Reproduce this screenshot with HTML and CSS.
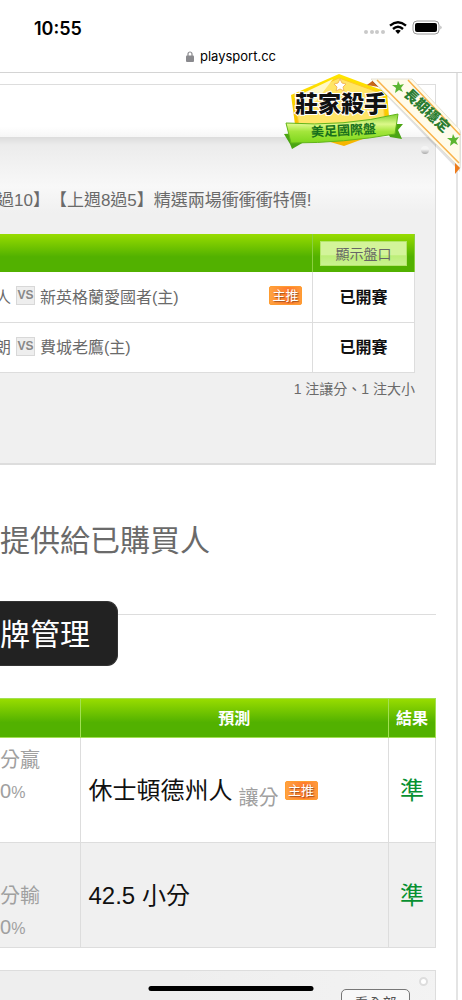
FILE: index.html
```html
<!DOCTYPE html>
<html lang="zh-Hant">

<head>
  <meta charset="UTF-8">
  <meta name="viewport" content="width=device-width, initial-scale=1.0">
  <title>playsport.cc</title>
  <link rel="stylesheet" href="styles.css">
</head>

<body>
  <header class="browser">
    <div class="status">
      <span class="time">10:55</span>
      <svg class="signals" viewBox="0 0 80 16" width="80" height="16" aria-hidden="true">
        <g fill="#c9c9c9">
          <circle cx="3" cy="12" r="2" />
          <circle cx="9" cy="12" r="2" />
          <circle cx="14" cy="12" r="2" />
          <circle cx="20" cy="12" r="2" />
        </g>
        <g fill="none" stroke="#000" stroke-width="2.4">
          <path d="M27 5.600Q35 -1 43 5.600" />
          <path d="M30 9Q35 4.600 40 9" />
        </g>
        <path d="M32.200 10.800Q35 8.800 37.800 10.800L35 14Z" />
        <rect x="50" y="1" width="26" height="13" rx="4" fill="none" stroke="#9a9a9a" />
        <rect x="52" y="3" width="22" height="9" rx="2" />
        <path d="M77.500 5.500Q79.500 7.500 77.500 9.500Z" fill="#9a9a9a" />
      </svg>
    </div>
    <div class="address">
      <svg viewBox="0 0 8 11" width="8" height="11" aria-hidden="true">
        <path d="M2 5V3a2 2 0 0 1 4 0v2" fill="none" stroke="#8a8a8e" stroke-width="1.200" />
        <rect y="4.500" width="8" height="6.500" rx="1" fill="#8a8a8e" />
      </svg>
      <span>playsport.cc</span>
    </div>
  </header>

  <main class="page">
    <section class="card">
      <div class="card-head"></div>
      <div class="card-body">
        <i class="knob"></i>
        <h2 class="title">過10】【上週8過5】精選兩場衝衝衝特價!</h2>
        <table class="games">
          <thead>
            <tr>
              <th></th>
              <th class="state"><button class="odds" type="button">顯示盤口</button></th>
            </tr>
          </thead>
          <tbody>
            <tr>
              <td>
                <div class="match"><span>人</span><b class="vs">VS</b><span>新英格蘭愛國者(主)</span><em class="pick">主推</em></div>
              </td>
              <td class="state">已開賽</td>
            </tr>
            <tr>
              <td>
                <div class="match"><span>朗</span><b class="vs">VS</b><span>費城老鷹(主)</span></div>
              </td>
              <td class="state">已開賽</td>
            </tr>
          </tbody>
        </table>
        <p class="note">1 注讓分、1 注大小</p>
      </div>

      <!-- 莊家殺手徽章 -->
      <svg class="medal" viewBox="280 68 182 110" width="182" height="110">
        <defs>
          <linearGradient id="gold" x1="0" y1="0" x2="0" y2="1">
            <stop offset="0" stop-color="#ffe600" />
            <stop offset="1" stop-color="#f5b400" />
          </linearGradient>
          <linearGradient id="lime" x1="0" y1="0" x2="0" y2="1">
            <stop offset="0" stop-color="#7fd030" />
            <stop offset="0.35" stop-color="#dcf88a" />
            <stop offset="0.6" stop-color="#a4e63c" />
            <stop offset="1" stop-color="#7dd61c" />
          </linearGradient>
        </defs>
        <path d="M340 74L388 92L391 129L345 146L297 132L292 95Z" fill="url(#gold)" />
        <path d="M340 78L384 94L386 127L345 140L300 128L296 97Z" fill="#ffe566" stroke="#ffc62e" />
        <path d="M296 97L334 79L318 100L298 112Z" fill="#fff8c8" />
        <path d="M341 79l2 4 4 1-3 3 1 4-4-2-4 2 1-4-3-3 4-1z" fill="#fff" stroke="#f5b95c" />
        <path d="M285 134L300 133L305 142L293 149L291 144Z" fill="#4aa512" />
        <path d="M384 124L404 124L399 130L403 139L391 137Z" fill="#4aa512" />
        <path d="M287 123Q345 127 399 114L396 134Q345 143 292 143Z" fill="url(#lime)" stroke="#63b51a" />
        <text class="medal-name" x="296" y="112">莊家殺手</text>
        <text class="medal-type" x="312" y="135" transform="rotate(-3 345 130)">美足國際盤</text>
        <path d="M368 85L376 79L386 88Z" fill="#c8651a" />
        <path d="M374 82L415 82L464 134L461 172Z" fill="#000" opacity="0.12" />
        <path d="M372 79L413 79L461 130L461 168Z" fill="#fffbea" stroke="#e4e0d4" />
        <path d="M378 80L460 163M409 80L461 135" fill="none" stroke="#f9b24a" stroke-width="1.500" />
        <path d="M456 163L461 168L456 174Z" fill="#ee7b1b" />
        <path d="M399 81l2 4 4-1-3 4 2 4-4-2-4 3 1-5-4-3 5 0z" fill="#5bb531" />
        <path d="M454 134l2 4 4-1-3 4 2 4-4-2-4 3 1-5-4-3 5 0z" fill="#5bb531" />
        <text class="medal-side" x="404" y="95" transform="rotate(43 404 95)">長期穩定</text>
      </svg>
    </section>

    <section class="buyers">
      <p class="lead">提供給已購買人</p>
      <div class="manage-row"><button class="manage" type="button">牌管理</button></div>
    </section>

    <table class="results">
      <thead>
        <tr>
          <th class="rate"></th>
          <th>預測</th>
          <th class="result">結果</th>
        </tr>
      </thead>
      <tbody>
        <tr>
          <td class="rate">分贏<br>0<small>%</small><br>&nbsp;</td>
          <td>
            <div class="guess"><span>休士頓德州人</span><span class="kind">讓分</span><em class="pick">主推</em></div>
          </td>
          <td class="result">準</td>
        </tr>
        <tr>
          <td class="rate">&nbsp;<br>分輸<br>0<small>%</small></td>
          <td>
            <div class="guess">42.5 小分</div>
          </td>
          <td class="result">準</td>
        </tr>
      </tbody>
    </table>

    <section class="more">
      <button class="all" type="button">看全部</button>
      <i class="ring"></i>
    </section>
  </main>
  <div class="home-bar"></div>
</body>

</html>
```

FILE: styles.css
```css
* {
  box-sizing: border-box;
  margin: 0;
  padding: 0;
}

body {
  height: 100vh;
  overflow: hidden;
  background: #fff;
  color: #6a6a6a;
  font-family: "Liberation Sans", "Noto Sans CJK TC", sans-serif;
  font-size: 16px;
}

button {
  font-family: inherit;
}

em,
i {
  font-style: normal;
}

table {
  width: 100%;
  border-collapse: collapse;
}

/* 瀏覽器列 */
.browser {
  height: 73px;
  border-bottom: 1px solid #d4d4d4;
  font-family: Inter, sans-serif;
  color: #000;
}

.status {
  display: flex;
  justify-content: space-between;
  align-items: center;
  height: 44px;
  padding: 12px 19px 0 34px;
}

.time {
  font-size: 18px;
  font-weight: 600;
}

.address {
  display: flex;
  justify-content: center;
  align-items: center;
  gap: 6px;
  height: 24px;
  font-size: 13px;
}

/* 主內容 */
.page {
  margin-right: 4px;
  padding: 11px 20px 0 0;
  border-right: 2px solid #e4e4e4;
}

.card {
  position: relative;
  border: 1px solid #ddd;
  border-width: 1px 1px 2px 0;
  background: #f0f0f0;
}

.card-head {
  height: 52px;
  background: linear-gradient(#fff 80%, #f6f6f6);
}

.card-body {
  position: relative;
  height: 326px;
  padding: 50px 20px 0 0;
  background: linear-gradient(#dcdcdc, #ececec 8px, #f8f8f8 50px, #f0f0f0 76px);
}

.knob {
  position: absolute;
  top: 9px;
  right: 6px;
  width: 8px;
  height: 8px;
  border-radius: 50%;
  background: linear-gradient(#f4f4f4 40%, #aaa);
}

.title {
  height: 47px;
  margin-left: -3px;
  font-size: 17px;
  font-weight: 400;
  line-height: 28px;
  text-spacing-trim: space-all;
  white-space: nowrap;
}

.games thead,
.results thead {
  background: linear-gradient(#98dc00, #52b100 60%, #52b100);
}

.games th {
  height: 38px;
}

.games td {
  height: 50px;
  padding-bottom: 2px;
  border-bottom: 1px solid #ddd;
  background: #fff;
}

.games .state {
  width: 102px;
  border-left: 1px solid #ddd;
  border-right: 1px solid #ddd;
  color: #111;
  font-weight: 700;
  text-align: center;
}

.games th.state {
  border-color: #8bd040;
}

.odds {
  width: 87px;
  height: 25px;
  border: 1px solid #b4e66a;
  background: linear-gradient(#d3f49a 55%, #bdee78 60%, #c9f290);
  color: #666;
  font-size: 14px;
}

.match {
  display: flex;
  align-items: center;
  gap: 5px;
  margin-left: -5px;
  padding-right: 10px;
}

.vs {
  width: 19px;
  height: 19px;
  border: 1px solid #d8d8d8;
  background: #eee;
  color: #888;
  font-size: 12px;
  line-height: 16px;
  text-align: center;
}

.pick {
  width: 33px;
  height: 19px;
  border: 1px solid #ff9c30;
  border-radius: 2px;
  background: linear-gradient(90deg, #ffa240, #ff7b2e 60%, #ff9a3a);
  color: #fff;
  font-size: 13px;
  font-weight: 400;
  line-height: 17px;
  text-align: center;
  text-shadow: 1px 1px 1px #a05020;
}

.match .pick {
  margin-left: auto;
}

.note {
  font-size: 14px;
  line-height: 32px;
  text-align: right;
}

.medal {
  position: absolute;
  top: -17px;
  right: -26px;
}

.medal-name {
  fill: #111;
  stroke: #fff;
  stroke-width: 2px;
  paint-order: stroke;
  font-size: 23px;
  font-weight: 900;
}

.medal-type {
  fill: #17701c;
  font-size: 13px;
  font-weight: 700;
}

.medal-side {
  fill: #2a7d31;
  font-size: 14px;
  font-weight: 900;
}

/* 已購買人 */
.lead {
  padding-top: 53px;
  font-size: 30px;
  line-height: 46px;
}

.manage-row {
  display: flex;
  align-items: center;
  margin: 37px 0 32px;
  background: linear-gradient(#ddd, #ddd) 0 13px / 100% 1px no-repeat;
}

.manage {
  width: 118px;
  height: 65px;
  padding-bottom: 4px;
  border: 1px solid #333;
  border-left: 0;
  border-radius: 0 11px 11px 0;
  background: #222;
  color: #fff;
  font-size: 30px;
  text-align: left;
}

/* 預測結果 */
.results th {
  height: 39px;
  padding-bottom: 3px;
  border: 1px solid #a2e052;
  color: #fff;
}

.results td {
  height: 105px;
  padding-bottom: 4px;
  border: 1px solid #ddd;
  color: #111;
  font-size: 24px;
}

.results tr:nth-child(2) td {
  background: #f0f0f0;
}

.results .rate {
  width: 80px;
  border-left: 0;
}

.results td.rate {
  padding: 4px 0 0;
  color: #a0a0a0;
  font-size: 20px;
  line-height: 31px;
}

.rate small {
  font-size: 16px;
}

.results .result {
  width: 47px;
  text-align: center;
}

.results td.result {
  color: #079030;
}

.guess {
  display: flex;
  align-items: center;
  gap: 6px;
  padding-left: 8px;
}

.guess .pick {
  margin-top: 4px;
}

.kind {
  padding-top: 16px;
  color: #a0a0a0;
  font-size: 20px;
}

/* 看全部 */
.more {
  position: relative;
  display: flex;
  justify-content: flex-end;
  margin-top: 22px;
  padding: 18px 25px;
  border: 1px solid #ddd;
  border-left: 0;
  background: linear-gradient(100deg, #eee 40%, #f3f3f3);
}

.all {
  width: 69px;
  height: 26px;
  border: 1px solid #777;
  border-radius: 5px;
  background: #f8f8f8;
  color: #555;
  font-size: 14px;
}

.ring {
  position: absolute;
  top: 6px;
  right: 7px;
  width: 9px;
  height: 9px;
  border: 2px solid #ddd;
  border-radius: 50%;
  background: #fff;
}

.home-bar {
  position: fixed;
  bottom: 9px;
  left: 50%;
  width: 165px;
  height: 5px;
  border-radius: 3px;
  background: #000;
  transform: translateX(-50%);
}
```
